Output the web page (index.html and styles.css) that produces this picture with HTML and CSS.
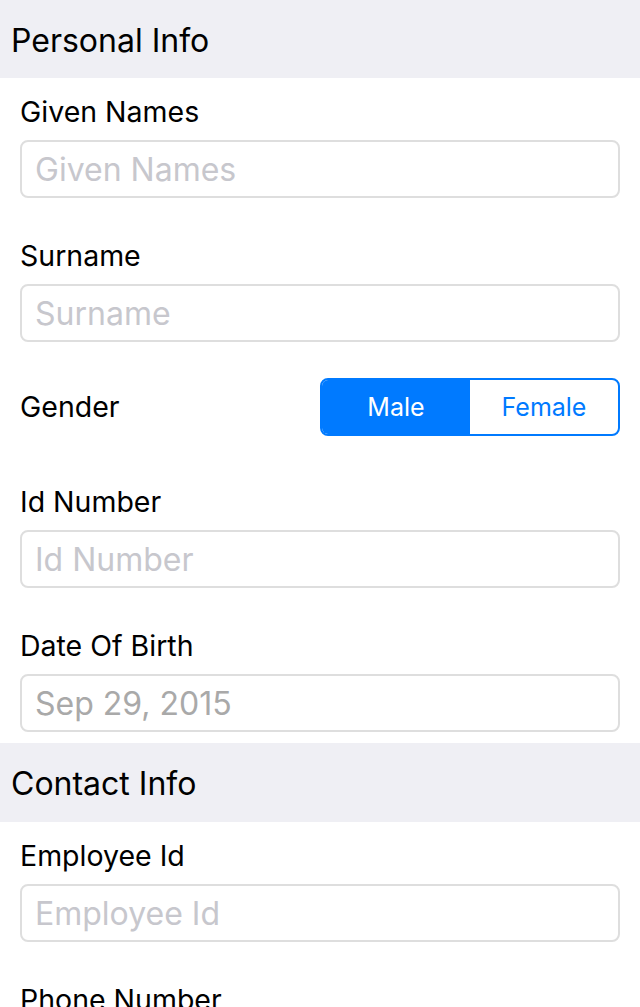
FILE: index.html
```html
<!DOCTYPE html>
<html>
<head>
<meta charset="utf-8">
<link rel="stylesheet" href="styles.css">
</head>
<body>
<div class="form">
  <div class="section-header">Personal Info</div>
  <div class="section-body">
    <div class="field">
      <div class="label">Given Names</div>
      <input class="input" type="text" placeholder="Given Names">
    </div>
    <div class="field">
      <div class="label">Surname</div>
      <input class="input" type="text" placeholder="Surname">
    </div>
    <div class="row">
      <div class="label">Gender</div>
      <div class="segmented">
        <div class="seg seg-active">Male</div>
        <div class="seg">Female</div>
      </div>
    </div>
    <div class="field">
      <div class="label">Id Number</div>
      <input class="input" type="text" placeholder="Id Number">
    </div>
    <div class="field field-last">
      <div class="label">Date Of Birth</div>
      <input class="input input-date" type="text" value="Sep 29, 2015">
    </div>
  </div>
  <div class="section-header section-header-2">Contact Info</div>
  <div class="section-body">
    <div class="field">
      <div class="label">Employee Id</div>
      <input class="input" type="text" placeholder="Employee Id">
    </div>
    <div class="field">
      <div class="label">Phone Number</div>
      <input class="input" type="text" placeholder="Phone Number">
    </div>
  </div>
</div>
</body>
</html>
```

FILE: styles.css
```css
* { box-sizing: border-box; }
html, body {
  margin: 0;
  padding: 0;
  background: #ffffff;
  font-family: "Inter", "Liberation Sans", sans-serif;
  color: #000;
  overflow: hidden;
}
.form {
  display: flex;
  flex-direction: column;
}
.section-header {
  height: 78px;
  background: #efeff4;
  display: flex;
  align-items: center;
  padding-left: 11px;
  font-size: 32px;
  padding-top: 2px;
}
.section-header-2 {
  height: 79px;
}
.field {
  padding: 17px 20px 24px;
  display: flex;
  flex-direction: column;
}
.field-last {
  padding-bottom: 11px;
}
.label {
  font-size: 28.5px;
  line-height: 34px;
  height: 34px;
  margin-bottom: 11px;
}
.input {
  display: block;
  width: 100%;
  height: 58px;
  border: 2px solid #dedede;
  border-radius: 8px;
  padding: 0 13px;
  font-family: inherit;
  font-size: 32px;
  color: #000;
  background: #fff;
  outline: none;
}
.input::placeholder {
  color: #c7c7cd;
  opacity: 1;
}
.input-date {
  color: #a9a9a9;
}
.row {
  padding: 12px 20px 32px;
  display: flex;
  align-items: center;
  justify-content: space-between;
}
.row .label {
  margin-bottom: 0;
}
.segmented {
  width: 300px;
  height: 58px;
  border: 2px solid #007aff;
  border-radius: 8px;
  display: flex;
  overflow: hidden;
}
.seg {
  flex: 1;
  display: flex;
  align-items: center;
  justify-content: center;
  font-size: 25px;
  color: #007aff;
}
.seg-active {
  background: #007aff;
  color: #fff;
}
```
